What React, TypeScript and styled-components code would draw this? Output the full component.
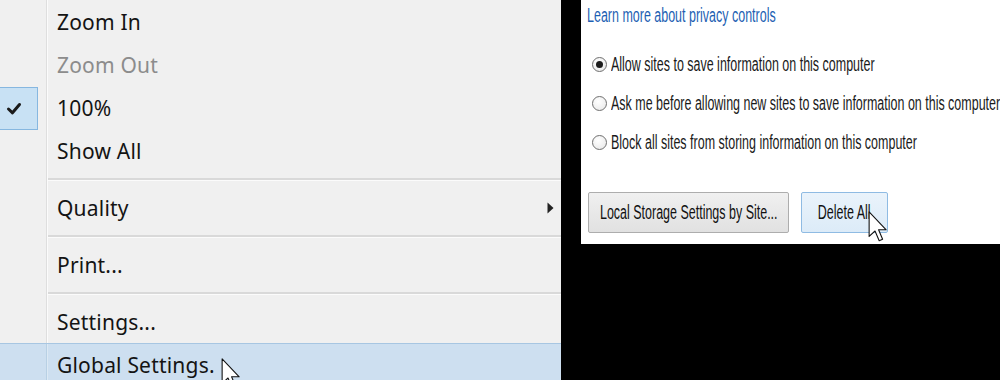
import React from 'react';
import styled, { createGlobalStyle } from 'styled-components';

const GlobalStyle = createGlobalStyle`
  html, body {
    margin: 0;
    padding: 0;
    background: #000;
    overflow: hidden;
  }
`;

const Screen = styled.div`
  display: flex;
  align-items: flex-start;
  gap: 20px;
  width: 1000px;
  height: 380px;
  background: #000;
  overflow: hidden;
`;

/* ---------- left: context menu ---------- */

const Menu = styled.div`
  position: relative;
  flex-shrink: 0;
  width: 561px;
  height: 380px;
  overflow: hidden;
  display: flex;
  flex-direction: column;
  background:
    linear-gradient(to right, transparent 46px, #dedede 46px, #dedede 47px, #fbfbfb 47px, #fbfbfb 48px, transparent 48px),
    #f0f0f0;
  font-family: "Noto Sans", "Open Sans", sans-serif;
  font-size: 21px;
  letter-spacing: 0.2px;
  color: #141414;
`;

const Item = styled.div<{ $disabled?: boolean; $hot?: boolean }>`
  flex-shrink: 0;
  box-sizing: border-box;
  display: flex;
  align-items: center;
  height: 43px;
  color: ${p => (p.$disabled ? '#8c8c8c' : 'inherit')};
  ${p =>
    p.$hot &&
    `
    border-top: 1px solid #a7c6e2;
    background:
      linear-gradient(to right, transparent 46px, #b8d0e4 46px, #b8d0e4 47px, #dce9f4 47px, #dce9f4 48px, transparent 48px),
      #cddff0;
  `}
`;

const Gutter = styled.div`
  position: relative;
  flex-shrink: 0;
  width: 47px;
  height: 100%;
  display: flex;
  align-items: center;
`;

const CheckBox = styled.div`
  box-sizing: border-box;
  width: 38px;
  height: 100%;
  margin-top: 1px;
  padding-left: 6px;
  background: #c8e1f4;
  border: 1px solid #86b7e0;
  border-left: none;
  display: flex;
  align-items: center;
`;

const Label = styled.span`
  flex: 1;
  padding-left: 10px;
  white-space: nowrap;
`;

const SubArrow = styled.svg`
  margin-right: 7px;
`;

const Separator = styled.div`
  flex-shrink: 0;
  height: 2px;
  margin: 6px 0 5px 48px;
  background: #d9d9d9;
  border-bottom: 1px solid #fbfbfb;
`;

/* ---------- right: storage settings panel ---------- */

const Panel = styled.div`
  position: relative;
  flex-shrink: 0;
  box-sizing: border-box;
  width: 419px;
  height: 244px;
  padding: 4px 0 0 6px;
  overflow: hidden;
  display: flex;
  flex-direction: column;
  background: #fff;
  font-family: "Liberation Sans", Arial, sans-serif;
  font-size: 19.5px;
  color: #1a1a1a;
`;

const Narrow = styled.span<{ $origin?: string }>`
  display: inline-block;
  flex-shrink: 0;
  white-space: nowrap;
  transform: scaleX(0.64);
  transform-origin: ${p => p.$origin || 'left'} center;
`;

const LearnLink = styled.a`
  display: block;
  height: 22px;
  line-height: 22px;
  color: #1d5fb3;
  text-decoration: underline;
  text-underline-offset: 2px;
`;

const RadioList = styled.div`
  display: flex;
  flex-direction: column;
  margin: 19px 0 0 5px;
`;

const RadioRow = styled.label`
  display: flex;
  align-items: center;
  gap: 4px;
  height: 39px;
`;

const RadioDot = styled.span<{ $checked?: boolean }>`
  position: relative;
  flex-shrink: 0;
  box-sizing: border-box;
  width: 15px;
  height: 15px;
  border-radius: 50%;
  border: 1px solid #6f6f6f;
  background: radial-gradient(circle at 40% 35%, #ffffff, #e6e6e6);

  ${p =>
    p.$checked &&
    `
    &::after {
      content: '';
      position: absolute;
      left: 3px;
      top: 3px;
      width: 7px;
      height: 7px;
      border-radius: 50%;
      background: #1c1c1c;
    }
  `}
`;

const ButtonRow = styled.div`
  display: flex;
  gap: 12px;
  margin: 30px 0 0 1px;
`;

const Button = styled.button<{ $w: number; $hot?: boolean }>`
  position: relative;
  box-sizing: border-box;
  width: ${p => p.$w}px;
  height: 41px;
  padding: 0;
  display: flex;
  align-items: center;
  justify-content: center;
  overflow: visible;
  border-radius: 2px;
  border: 1px solid ${p => (p.$hot ? '#8fbbe3' : '#adadad')};
  background: ${p =>
    p.$hot ? 'linear-gradient(#eaf3fb, #dcebf8)' : 'linear-gradient(#f0f0f0, #e1e1e1)'};
  font: inherit;
  color: #111;
`;

const Cursor = styled.svg<{ $x: number; $y: number }>`
  position: absolute;
  left: ${p => p.$x}px;
  top: ${p => p.$y}px;
  pointer-events: none;
`;

const Pointer: React.FC<{ x: number; y: number }> = ({ x, y }) => (
  <Cursor $x={x} $y={y} width="19" height="31" viewBox="0 0 12 20">
    <path
      d="M0.6 0.6 L0.6 16.4 L4.4 12.9 L7.1 19.2 L9.3 18.2 L6.7 12.1 L11.6 12.1 Z"
      fill="#fff"
      stroke="#111"
      strokeWidth="0.7"
      strokeLinejoin="round"
    />
  </Cursor>
);

const Check = () => (
  <svg width="16" height="13" viewBox="0 0 15 13">
    <path d="M2 7 L6 10.8 L13 2.5" fill="none" stroke="#1a1a1a" strokeWidth="3" strokeLinecap="round" strokeLinejoin="round" />
  </svg>
);

export default function App() {
  return (
    <>
      <GlobalStyle />
      <Screen>
        <Menu>
          <Item><Gutter /><Label>Zoom In</Label></Item>
          <Item $disabled><Gutter /><Label>Zoom Out</Label></Item>
          <Item>
            <Gutter><CheckBox><Check /></CheckBox></Gutter>
            <Label>100%</Label>
          </Item>
          <Item><Gutter /><Label>Show All</Label></Item>
          <Separator />
          <Item>
            <Gutter />
            <Label>Quality</Label>
            <SubArrow width="7" height="12" viewBox="0 0 7 12">
              <path d="M0.5 0.5 L6.5 6 L0.5 11.5 Z" fill="#222" />
            </SubArrow>
          </Item>
          <Separator />
          <Item><Gutter /><Label>Print...</Label></Item>
          <Separator />
          <Item><Gutter /><Label>Settings...</Label></Item>
          <Item $hot><Gutter /><Label>Global Settings.</Label></Item>
          <Pointer x={221} y={358} />
        </Menu>

        <Panel>
          <LearnLink href="#"><Narrow>Learn more about privacy controls</Narrow></LearnLink>
          <RadioList>
            <RadioRow><RadioDot $checked /><Narrow>Allow sites to save information on this computer</Narrow></RadioRow>
            <RadioRow><RadioDot /><Narrow>Ask me before allowing new sites to save information on this computer</Narrow></RadioRow>
            <RadioRow><RadioDot /><Narrow>Block all sites from storing information on this computer</Narrow></RadioRow>
          </RadioList>
          <ButtonRow>
            <Button $w={201}><Narrow $origin="center">Local Storage Settings by Site...</Narrow></Button>
            <Button $w={87} $hot><Narrow $origin="center">Delete All</Narrow></Button>
          </ButtonRow>
          <Pointer x={287} y={211} />
        </Panel>
      </Screen>
    </>
  );
}
